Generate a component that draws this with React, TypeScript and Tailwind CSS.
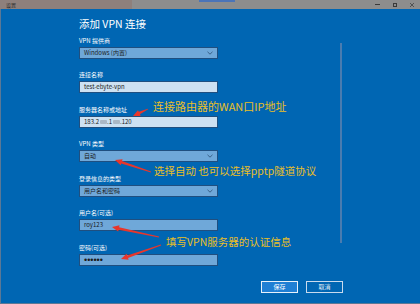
import React from "react";

const CJK = { fontFamily: '"Noto Sans CJK SC", "Liberation Sans", sans-serif' };

function arrowPoints(x1: number, y1: number, x2: number, y2: number) {
  const dx = x2 - x1;
  const dy = y2 - y1;
  const len = Math.hypot(dx, dy);
  const ux = dx / len;
  const uy = dy / len;
  const nx = -uy;
  const ny = ux;
  const headLen = 7;
  const headW = 3.2;
  const bx = x2 - ux * headLen;
  const by = y2 - uy * headLen;
  const tailW = 0.4;
  const neckW = 1.3;
  const p = (x: number, y: number) => `${x.toFixed(2)},${y.toFixed(2)}`;
  return [
    p(x1 + nx * tailW, y1 + ny * tailW),
    p(bx + nx * neckW, by + ny * neckW),
    p(bx + nx * headW, by + ny * headW),
    p(x2, y2),
    p(bx - nx * headW, by - ny * headW),
    p(bx - nx * neckW, by - ny * neckW),
    p(x1 - nx * tailW, y1 - ny * tailW),
  ].join(" ");
}

const arrows: [number, number, number, number][] = [
  [148, 109, 133, 116],
  [151, 172, 115, 160],
  [159, 237, 112, 227],
  [161, 245, 121, 259],
];

function Chevron() {
  return (
    <svg width="6" height="4" viewBox="0 0 6 4" className="shrink-0">
      <path d="M0.5 0.8 L3 3.2 L5.5 0.8" fill="none" stroke="#2c4f74" strokeWidth="0.8" />
    </svg>
  );
}

function Field({
  label,
  value,
  select,
  light,
  mt,
  password,
}: {
  label: string;
  value: React.ReactNode;
  select?: boolean;
  light?: boolean;
  mt: string;
  password?: boolean;
}) {
  return (
    <div className={`flex flex-col ${mt}`}>
      <div className="h-[7px] text-[6px] leading-[7px] text-white" style={CJK}>
        {label}
      </div>
      <div
        className={`mt-[3px] flex h-[12px] w-[139px] items-center justify-between border border-[#1f4f80] pl-[4px] pr-[4px] ${
          light ? "bg-[#cde1f2]" : "bg-[#6fa8d9]"
        }`}
      >
        {password ? (
          <span className="text-[9px] leading-[10px] text-[#1a1a1a]" style={{ fontFamily: '"Liberation Sans", sans-serif' }}>
            ••••••
          </span>
        ) : (
          <span className="flex items-center text-[6px] leading-[8px] text-[#1b1b1b]" style={CJK}>
            {value}
          </span>
        )}
        {select && <Chevron />}
      </div>
    </div>
  );
}

function Blur() {
  return <span className="mx-[0.5px] inline-block h-[4px] w-[7px] rounded-[1px] bg-[#aab8c6]" />;
}

export default function App() {
  return (
    <div className="relative flex h-[304px] w-[420px] flex-col overflow-hidden bg-[#0066b3]" style={CJK}>
      {/* top bar */}
      <div className="relative flex h-[9px] w-full shrink-0 items-center bg-[#8d8d8d]">
        <div className="flex h-full w-[132px] items-center bg-[#8e807c] pl-[6px]">
          <span className="text-[5px] leading-[6px] text-[#2a2a2a]">设置</span>
        </div>
        <div className="absolute left-[199px] top-0 h-[1.5px] w-[36px] bg-[#4b74b8]" />
        <div className="ml-auto flex items-center gap-[13px] pr-[6px]">
          <div className="h-[0.8px] w-[5px] bg-[#3a3a3a]" />
          <div className="h-[4px] w-[4px] border-[0.8px] border-[#3a3a3a]" />
          <svg width="4" height="4" viewBox="0 0 4 4">
            <path d="M0 0 L4 4 M4 0 L0 4" stroke="#3a3a3a" strokeWidth="0.7" />
          </svg>
        </div>
      </div>

      {/* main */}
      <div className="relative flex flex-1 flex-col border-l border-[#5b7896] pl-[78px]">
        <div className="mt-[8px] h-[14px] text-[10.5px] leading-[14px] text-white">添加 VPN 连接</div>
        <Field mt="mt-[6px]" label="VPN 提供商" value="Windows (内置)" select />
        <Field mt="mt-[12px]" label="连接名称" value="test-ebyte-vpn" light />
        <Field
          mt="mt-[13px]"
          label="服务器名称或地址"
          value={
            <>
              183.2
              <Blur />.1
              <Blur />.120
            </>
          }
          light
        />
        <Field mt="mt-[12px]" label="VPN 类型" value="自动" select />
        <Field mt="mt-[13px]" label="登录信息的类型" value="用户名和密码" select />
        <Field mt="mt-[12px]" label="用户名(可选)" value="roy123" />
        <Field mt="mt-[13px]" label="密码(可选)" value="" password />

        <div className="mt-[15px] flex w-[264px] justify-end gap-[8px]">
          <div className="flex h-[12px] w-[37px] items-center justify-center border border-[#e8f1fa] bg-[#1f7fd4] text-[6px] leading-[8px] text-white">
            保存
          </div>
          <div className="flex h-[12px] w-[37px] items-center justify-center border border-[#c9dbee] text-[6px] leading-[8px] text-[#e6eef6]">
            取消
          </div>
        </div>

        {/* scrollbar */}
        <div className="absolute left-[339px] top-[34px] h-[200px] w-[2px] bg-[#4a7cb0]" />
      </div>

      {/* annotations */}
      <div className="pointer-events-none absolute inset-0">
        <svg className="absolute inset-0" width="420" height="304">
          {arrows.map((a, i) => (
            <polygon key={i} points={arrowPoints(a[0], a[1], a[2], a[3])} fill="#e8362b" />
          ))}
        </svg>
        <div className="absolute left-[153px] top-[99px] text-[11px] leading-[14px] text-[#e9bf27]">
          连接路由器的WAN口IP地址
        </div>
        <div className="absolute left-[154px] top-[164px] whitespace-nowrap text-[10.5px] leading-[14px] text-[#e9bf27]">
          选择自动 也可以选择pptp隧道协议
        </div>
        <div className="absolute left-[166px] top-[235px] whitespace-nowrap text-[10.5px] leading-[14px] text-[#e9bf27]">
          填写VPN服务器的认证信息
        </div>
      </div>
      <div className="absolute bottom-0 left-0 h-[1px] w-full bg-[#5b7896]" />
    </div>
  );
}
